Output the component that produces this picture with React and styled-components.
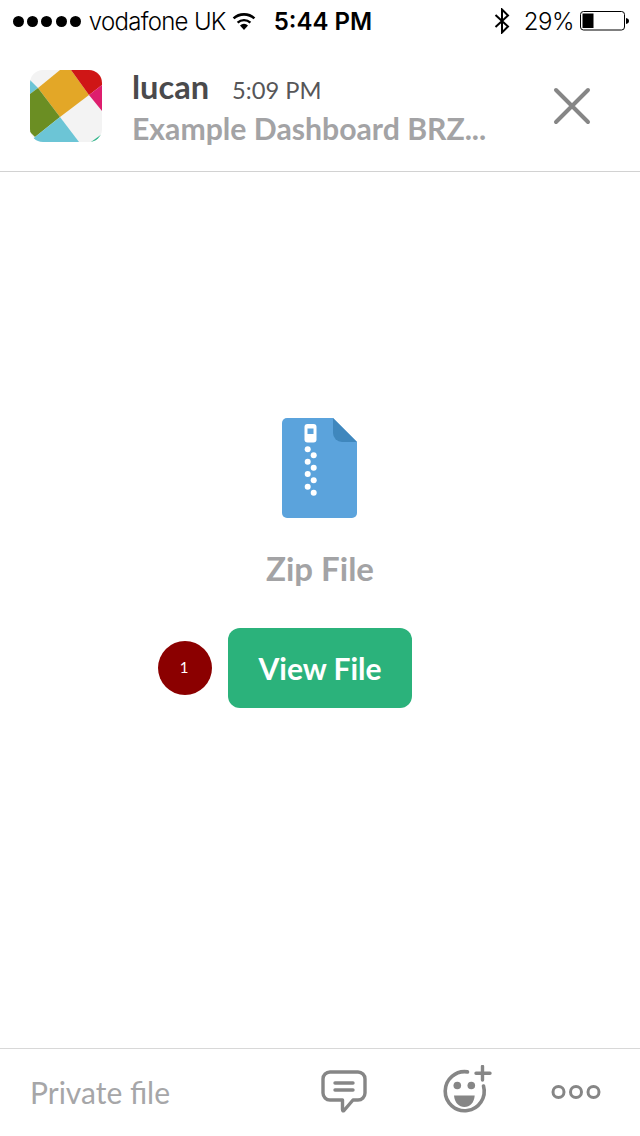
import styled, { createGlobalStyle } from "styled-components";

const GlobalStyle = createGlobalStyle`
  html, body {
    margin: 0;
    padding: 0;
    background: #fff;
  }
  * {
    box-sizing: border-box;
  }
`;

const Screen = styled.div`
  display: flex;
  flex-direction: column;
  width: 640px;
  height: 1136px;
  background: #fff;
  overflow: hidden;
`;

const StatusBar = styled.div`
  display: flex;
  align-items: center;
  height: 42px;
  padding: 0 11px 0 13px;
  font-family: Inter, "Liberation Sans", sans-serif;
  font-size: 24px;
  font-weight: 300;
  color: #000;
`;

const SignalDots = styled.div`
  display: flex;
  gap: 3.2px;
  margin-right: 8px;
`;

const SignalDot = styled.span`
  width: 11px;
  height: 11px;
  border-radius: 50%;
  background: #000;
`;

const Carrier = styled.span`
  width: 143px;
  white-space: nowrap;
  letter-spacing: -0.7px;
`;

const Clock = styled.span`
  margin-left: 18px;
  font-weight: 600;
  white-space: nowrap;
`;

const StatusRight = styled.div`
  display: flex;
  align-items: center;
  margin-left: auto;
`;

const Percent = styled.span`
  margin: 0 6px 0 14px;
  letter-spacing: -0.5px;
`;

const Header = styled.header`
  display: flex;
  align-items: center;
  height: 130px;
  padding: 0 49px 2px 30px;
  border-bottom: 1px solid #d2d2d2;
  font-family: Lato, sans-serif;
`;

const Avatar = styled.svg`
  display: block;
  flex: none;
  width: 72px;
  height: 72px;
  border-radius: 13px;
`;

const HeaderText = styled.div`
  display: flex;
  flex-direction: column;
  margin-left: 30px;
  padding-top: 4px;
`;

const TitleRow = styled.div`
  display: flex;
  align-items: baseline;
  line-height: 40px;
`;

const Sender = styled.span`
  font-size: 32.6px;
  font-weight: 700;
  color: #4a4a4c;
`;

const Time = styled.span`
  margin-left: 23px;
  font-size: 23.7px;
  color: #565658;
`;

const Subtitle = styled.div`
  margin-top: -2px;
  font-size: 30.2px;
  font-weight: 700;
  line-height: 40px;
  color: #a3a3a5;
  white-space: nowrap;
`;

const CloseIcon = styled.svg`
  display: block;
  margin-left: auto;
`;

const Content = styled.main`
  flex: 1;
  display: flex;
  flex-direction: column;
  align-items: center;
  padding-top: 246px;
  font-family: Lato, sans-serif;
`;

const FileIcon = styled.svg`
  display: block;
  margin-right: 2px;
`;

const FileType = styled.div`
  margin-top: 29px;
  font-size: 33px;
  font-weight: 700;
  line-height: 42px;
  color: #a3a3a5;
`;

const ButtonWrap = styled.div`
  position: relative;
  margin-top: 39px;
`;

const ViewButton = styled.button`
  display: block;
  width: 184px;
  height: 80px;
  padding: 0;
  border: 0;
  border-radius: 12px;
  background: #2bb27b;
  color: #fff;
  font-family: Lato, sans-serif;
  font-size: 30px;
  font-weight: 700;
`;

const Badge = styled.span`
  position: absolute;
  top: 13px;
  right: calc(100% + 16px);
  display: flex;
  align-items: center;
  justify-content: center;
  width: 54px;
  height: 54px;
  padding: 0 2px 2px 0;
  border-radius: 50%;
  background: #8b0000;
  color: #fff;
  font-family: Lato, sans-serif;
  font-size: 15px;
`;

const Footer = styled.footer`
  display: flex;
  align-items: center;
  height: 88px;
  padding: 0 39px 2px 30px;
  border-top: 1px solid #d8d8d8;
`;

const FooterLabel = styled.span`
  font-family: Lato, sans-serif;
  font-size: 30px;
  color: #a6a6a8;
`;

const FooterIcons = styled.div`
  display: flex;
  align-items: center;
  margin-left: auto;
`;

const FooterIcon = styled.svg`
  display: block;
  margin-left: ${(props) => props.$gap || 0}px;
`;

function App() {
  return (
    <Screen>
      <GlobalStyle />
      <StatusBar>
        <SignalDots>
          {[0, 1, 2, 3, 4].map((dot) => (
            <SignalDot key={dot} />
          ))}
        </SignalDots>
        <Carrier>vodafone UK</Carrier>
        <svg width="24" height="18" viewBox="0 0 24 18">
          <path d="M12 18 L8 13.4 A6 6 0 0 1 16 13.4 Z" fill="#000" />
          <path d="M5.6 10.6 A9.6 9.6 0 0 1 18.4 10.6" fill="none" stroke="#000" strokeWidth="2.4" />
          <path d="M1.6 6.4 A15.4 15.4 0 0 1 22.4 6.4" fill="none" stroke="#000" strokeWidth="2.6" />
        </svg>
        <Clock>5:44 PM</Clock>
        <StatusRight>
          <svg width="16" height="26" viewBox="0 0 16 26">
            <path d="M1.5 7 L14 18.5 L8 24.5 V1.5 L14 7.5 L1.5 19" fill="none" stroke="#000" strokeWidth="2" />
          </svg>
          <Percent>29%</Percent>
          <svg width="49" height="20" viewBox="0 0 49 20">
            <rect x="0.5" y="0.5" width="44" height="18.5" rx="3" fill="none" stroke="#000" />
            <rect x="2.5" y="2.5" width="11" height="14.5" fill="#000" />
            <path d="M46 7 C48 7.3 49 8.5 49 10 C49 11.5 48 12.7 46 13 Z" fill="#000" />
          </svg>
        </StatusRight>
      </StatusBar>

      <Header>
        <Avatar viewBox="0 0 72 72">
          <rect width="72" height="72" fill="#f3f3f3" />
          <polygon points="0,10 8,18 0,24" fill="#6cc5d6" />
          <polygon points="30,0 41,0 59,25 30,47 8,18" fill="#e3a727" />
          <polygon points="41,0 72,0 72,15 59,25" fill="#cf1616" />
          <polygon points="59,25 72,15 72,41" fill="#de1e6e" />
          <polygon points="0,24 8,18 30,47 5,67 0,62" fill="#6b8e23" />
          <polygon points="30,47 49,72 0,72 5,67" fill="#6cc5d6" />
          <polygon points="61,72 72,64 72,72" fill="#2fb58a" />
        </Avatar>
        <HeaderText>
          <TitleRow>
            <Sender>lucan</Sender>
            <Time>5:09 PM</Time>
          </TitleRow>
          <Subtitle>Example Dashboard BRZ...</Subtitle>
        </HeaderText>
        <CloseIcon width="38" height="38" viewBox="0 0 38 38">
          <path d="M3 3 L35 35 M35 3 L3 35" stroke="#868686" strokeWidth="4" strokeLinecap="round" />
        </CloseIcon>
      </Header>

      <Content>
        <FileIcon width="75" height="100" viewBox="0 0 75 100">
          <path
            d="M5 0 H51 L75 24 V95 A5 5 0 0 1 70 100 H5 A5 5 0 0 1 0 95 V5 A5 5 0 0 1 5 0 Z"
            fill="#5ba3dc"
          />
          <path d="M51 0 L75 24 H60 A9 9 0 0 1 51 15 Z" fill="#3f87bd" />
          <rect x="22.5" y="6" width="12" height="18.5" rx="3" fill="#fff" />
          <rect x="25.5" y="10.5" width="6" height="5.5" fill="#5ba3dc" />
          {[
            [25.7, 31.3],
            [31.7, 37.3],
            [25.7, 43.7],
            [31.7, 49.7],
            [25.7, 56],
            [31.7, 62.3],
            [25.7, 68.7],
            [31.7, 74.7],
          ].map(([cx, cy]) => (
            <circle key={cy} cx={cx} cy={cy} r="3" fill="#fff" />
          ))}
        </FileIcon>
        <FileType>Zip File</FileType>
        <ButtonWrap>
          <Badge>1</Badge>
          <ViewButton>View File</ViewButton>
        </ButtonWrap>
      </Content>

      <Footer>
        <FooterLabel>Private file</FooterLabel>
        <FooterIcons>
          <FooterIcon width="46" height="44" viewBox="0 0 46 44">
            <path
              d="M9 2 H37 A7 7 0 0 1 44 9 V23 A7 7 0 0 1 37 30 H32 L23 40.5 Q21.5 41.5 21.5 39.5 V30 H9 A7 7 0 0 1 2 23 V9 A7 7 0 0 1 9 2 Z"
              fill="none"
              stroke="#868686"
              strokeWidth="3.4"
              strokeLinejoin="round"
            />
            <path d="M14 13 H32 M14 20 H32" stroke="#868686" strokeWidth="3.4" strokeLinecap="round" />
          </FooterIcon>
          <FooterIcon $gap={76} width="50" height="54" viewBox="0 0 50 54">
            <path
              d="M24.5 6.9 A19.5 19.5 0 1 0 40.5 21"
              fill="none"
              stroke="#868686"
              strokeWidth="3.6"
              strokeLinecap="round"
            />
            <path d="M39.5 1.5 V15 M33 8.3 H47" stroke="#868686" strokeWidth="3.4" strokeLinecap="round" />
            <circle cx="14.3" cy="20.5" r="3.8" fill="#868686" />
            <circle cx="28.3" cy="20.5" r="3.8" fill="#868686" />
            <path d="M11 30.5 H31.7 C31 38 27 42 21.4 42 C16 42 11.7 38 11 30.5 Z" fill="#868686" />
          </FooterIcon>
          <FooterIcon $gap={58} width="50" height="16" viewBox="0 0 50 16">
            <circle cx="7.5" cy="8" r="5.5" fill="none" stroke="#868686" strokeWidth="3" />
            <circle cx="25" cy="8" r="5.5" fill="none" stroke="#868686" strokeWidth="3" />
            <circle cx="42.5" cy="8" r="5.5" fill="none" stroke="#868686" strokeWidth="3" />
          </FooterIcon>
        </FooterIcons>
      </Footer>
    </Screen>
  );
}

export default App;
